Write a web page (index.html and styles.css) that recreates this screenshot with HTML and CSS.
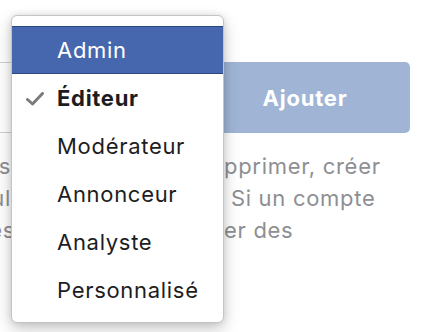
FILE: index.html
```html
<!DOCTYPE html>
<html lang="fr">
<head>
    <meta charset="UTF-8">
    <title>Ajouter un rôle</title>
    <link rel="stylesheet" href="styles.css">
</head>
<body>
    <div class="page">
        <!-- Add person row -->
        <div class="add-row">
            <div class="name-input"></div>
            <button class="add-btn">Ajouter</button>
        </div>

        <!-- Help text under the row -->
        <div class="help">
            <div class="help-line">
                <span class="frag-left">Les administrateurs</span>
                <span class="frag-mid">peuvent modifier, su</span>
                <span class="frag-right">pprimer, créer</span>
            </div>
            <div class="help-line">
                <span class="frag-left">et consul</span>
                <span class="frag-mid">ter les résultats.</span>
                <span class="frag-right">&nbsp;Si un compte</span>
            </div>
            <div class="help-line wide">
                <span class="frag-left">les</span>
                <span class="frag-mid">rôles permettent de gér</span>
                <span class="frag-right">er des</span>
            </div>
        </div>

        <!-- Role dropdown menu -->
        <ul class="role-menu">
            <li class="role-item active">Admin</li>
            <li class="role-item checked">
                <svg class="check" viewBox="0 0 18 14" width="18" height="14">
                    <path d="M1.5 7.5 L6.5 12 L16.5 1.5" fill="none" stroke="#7b7b7b" stroke-width="3" stroke-linecap="round" stroke-linejoin="round"/>
                </svg>
                Éditeur
            </li>
            <li class="role-item">Modérateur</li>
            <li class="role-item">Annonceur</li>
            <li class="role-item">Analyste</li>
            <li class="role-item">Personnalisé</li>
        </ul>
    </div>
</body>
</html>
```

FILE: styles.css
```css
html, body { margin: 0; padding: 0; background: #fff; }
body { font-family: Inter, "Noto Sans", "Liberation Sans", sans-serif; width: 428px; height: 332px; overflow: hidden; }
.page { position: relative; height: 332px; }

.add-row { display: flex; gap: 8px; padding-top: 62px; padding-right: 18px; margin-left: -40px; }
.name-input { flex: 1; height: 69px; border: 1px solid #cfd1d4; border-radius: 4px; }
.add-btn {
    width: 210px; height: 71px; border: none; border-radius: 5px; background: #a0b5d6;
    color: #fff; font-family: inherit; font-size: 22px; font-weight: 700; letter-spacing: 0.8px; padding: 0;
}

.help { margin-top: 17px; color: #8d8f93; font-size: 22px; letter-spacing: 0.7px; line-height: 32px; }
.help-line { display: grid; grid-template-columns: 11px 213px auto; white-space: nowrap; }
.help-line.wide { grid-template-columns: 15px 209px auto; }
.frag-left { display: flex; justify-content: flex-end; }
.frag-mid { font-size: 16px; }

.role-menu {
    position: absolute; left: 11px; top: 15px; width: 211px; height: 296px;
    margin: 0; padding: 10px 0 0; list-style: none; background: #fff;
    border: 1px solid #c4c4c4; border-radius: 6px;
    box-shadow: 0 6px 16px rgba(0,0,0,0.22), 0 0 6px rgba(0,0,0,0.1);
}
.role-item {
    position: relative; height: 48px; line-height: 48px; padding-left: 45px;
    font-size: 22px; letter-spacing: 0.7px; color: #1d1d1f; box-sizing: border-box;
}
.role-item.active {
    background: #4667ae; color: #fff; line-height: 46px;
    border-top: 1px solid #2b4680; border-bottom: 1px solid #2b4680;
}
.role-item.checked { font-weight: 700; }
.check { position: absolute; left: 14px; top: 18px; }
```
